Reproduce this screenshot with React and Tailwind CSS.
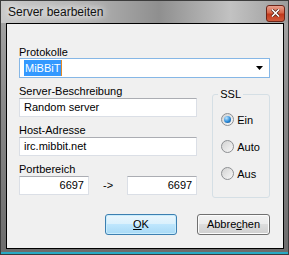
import React from "react";

const font = { fontFamily: '"Liberation Sans", Arial, sans-serif' };

function TextBox({ value, right = false, className = "" }) {
  return (
    <div
      className={`h-[19px] bg-white border border-[#dbdfe6] border-t-[#abadb3] flex items-center text-[11px] text-black ${right ? "justify-end pr-[4px]" : "pl-[4px]"} ${className}`}
    >
      {value}
    </div>
  );
}

function Radio({ label, checked }) {
  return (
    <div className="flex items-center h-[13px] gap-[3px]">
      <div className="w-[13px] h-[13px] rounded-full border border-[#8d8f92] bg-[linear-gradient(to_bottom_right,#d2d2d2,#f8f8f8)] flex items-center justify-center">
        {checked && (
          <div className="w-[7px] h-[7px] rounded-full bg-[radial-gradient(circle_at_35%_30%,#bfe6ff,#2a8ad8_55%,#0d3f7a)]" />
        )}
      </div>
      <span className="text-[11px] leading-[12px] text-black">{label}</span>
    </div>
  );
}

export default function App() {
  return (
    <div
      style={font}
      className="w-[289px] h-[255px] flex flex-col border border-[#3c3c3c] bg-[linear-gradient(to_bottom,#a9a9a9,#8a8a8a_40%,#6c6c6c)]"
    >
      {/* title bar */}
      <div className="h-[22px] flex items-center justify-between pl-[7px] pr-[3px] bg-[linear-gradient(to_right,#c9c9c9,#b3b3b3_30%,#8f8f8f_55%,#c2c2c2_80%,#9c9c9c)]">
        <span className="text-[12px] text-[#111] [text-shadow:0_0_6px_#fff,0_0_10px_#fff]">
          Server bearbeiten
        </span>
        <div className="mt-[2px] w-[19px] h-[17px] rounded-[3px] border border-[#6b2418] bg-[linear-gradient(to_bottom,#e8a08e,#d7664a_45%,#c2391c_55%,#d05a3c)] flex items-center justify-center">
          <svg width="9" height="8" viewBox="0 0 9 8">
            <path d="M1 0.5 L8 7.5 M8 0.5 L1 7.5" stroke="#4a1a10" strokeWidth="3" />
            <path d="M1 0.5 L8 7.5 M8 0.5 L1 7.5" stroke="#fff" strokeWidth="1.6" />
          </svg>
        </div>
      </div>

      {/* client area */}
      <div className="flex-1 ml-[5px] mr-[4px] border border-black bg-[#f0f0f0] pt-[22px] pl-[12px] pr-[13px] flex flex-col text-black">
        <div className="text-[11px] leading-[12px] h-[12px]">Protokolle</div>
        <div className="h-[20px] bg-white border border-[#86b7e6] flex items-center justify-between pl-[4px] pr-[6px]">
          <div className="flex items-center h-[16px]">
            <span className="bg-[#3399ff] text-white text-[11px] leading-[16px] px-[1px]">MiBBiT</span>
            <span className="w-[1px] h-[16px] bg-[#e08a2a]" />
          </div>
          <svg width="7" height="4" viewBox="0 0 7 4">
            <path d="M0 0 H7 L3.5 4 Z" fill="#000" />
          </svg>
        </div>

        <div className="mt-[7px] flex gap-[15px]">
          <div className="w-[179px] flex flex-col">
            <div className="text-[11px] leading-[12px] h-[13px]">Server-Beschreibung</div>
            <TextBox value="Random server" />
            <div className="mt-[7px] text-[11px] leading-[12px] h-[13px]">Host-Adresse</div>
            <TextBox value="irc.mibbit.net" />
            <div className="mt-[7px] text-[11px] leading-[12px] h-[13px]">Portbereich</div>
            <div className="flex items-center justify-between">
              <TextBox value="6697" right className="w-[70px]" />
              <span className="text-[11px]">-&gt;</span>
              <TextBox value="6697" right className="w-[70px]" />
            </div>
          </div>

          <fieldset className="block mt-[3px] w-[58px] h-[110px] border border-[#d5dfe5] rounded-[3px] text-left">
            <legend className="ml-[5px] px-[2px] text-[11px] leading-[12px] text-left">SSL</legend>
            <div className="pl-[8px] pt-[13px] flex flex-col gap-[14px]">
              <Radio label="Ein" checked />
              <Radio label="Auto" />
              <Radio label="Aus" />
            </div>
          </fieldset>
        </div>

        <div className="mt-[16px] flex justify-end gap-[20px]">
          <div className="w-[72px] h-[21px] rounded-[3px] border border-[#3c7fb1] bg-[linear-gradient(to_bottom,#eaf6fd,#d9f0fc_50%,#bee6fd_50%,#a7d9f5)] flex items-center justify-center text-[11px] shadow-[inset_0_0_0_1px_#c9ecfc]">
            <span><span className="underline">O</span>K</span>
          </div>
          <div className="w-[73px] h-[21px] rounded-[3px] border border-[#707070] bg-[linear-gradient(to_bottom,#f2f2f2,#ebebeb_50%,#dddddd_50%,#cfcfcf)] flex items-center justify-center text-[11px] shadow-[inset_0_0_0_1px_#fcfcfc]">
            <span>Abbre<span className="underline">c</span>hen</span>
          </div>
        </div>
      </div>

      <div className="h-[5px] border-b-2 border-[#27a9c3]" />
    </div>
  );
}
